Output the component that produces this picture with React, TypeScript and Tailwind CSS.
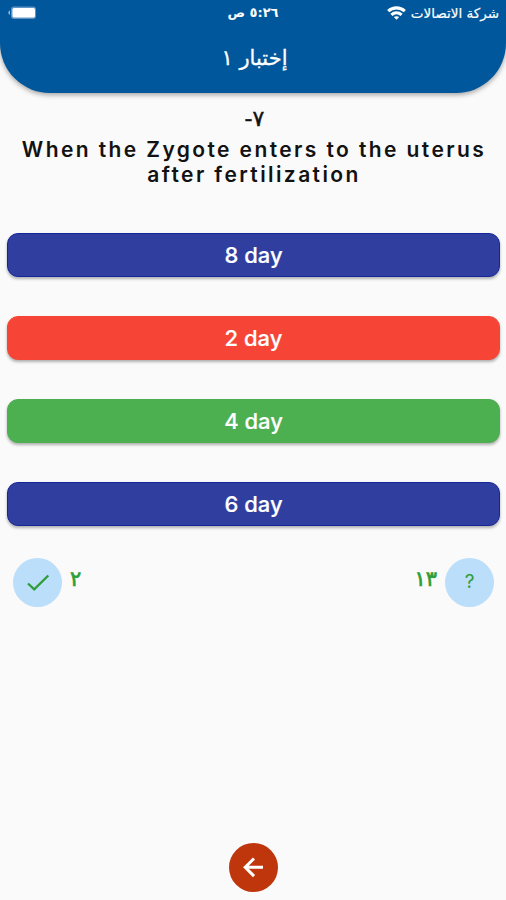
type Status = 'idle' | 'wrong' | 'correct';

interface Answer {
  id: number;
  label: string;
  status: Status;
}

const answers: Answer[] = [
  { id: 1, label: '8 day', status: 'idle' },
  { id: 2, label: '2 day', status: 'wrong' },
  { id: 3, label: '4 day', status: 'correct' },
  { id: 4, label: '6 day', status: 'idle' },
];

const statusColors: Record<Status, string> = {
  idle: 'bg-[#303f9f] border-[#15269a]',
  wrong: 'bg-[#f64537] border-[#f64537]',
  correct: 'bg-[#4caf50] border-[#4caf50]',
};

function WifiIcon() {
  return (
    <svg className="w-[19px] h-[14px]" viewBox="0 0 19 14" fill="none" stroke="white" strokeWidth="3.1">
      <path d="M1.2 5.2C6 0.8 13 0.8 17.8 5.2" />
      <path d="M4.4 8.8C7.4 6.2 11.6 6.2 14.6 8.8" />
      <path d="M9.5 13.8L6.8 11.1C8.4 9.9 10.6 9.9 12.2 11.1Z" fill="white" stroke="none" />
    </svg>
  );
}

function BatteryIcon() {
  return (
    <svg className="w-[30px] h-[14px]" viewBox="0 0 30 14">
      <rect x="4" y="0.5" width="25" height="12.5" rx="3" fill="#5f94c4" />
      <rect x="5.5" y="2" width="22.5" height="9.5" rx="1.5" fill="white" />
      <path d="M3 4.6V9C0.8 8.4 0.8 5.2 3 4.6Z" fill="#8fb4d6" />
    </svg>
  );
}

function StatusBar() {
  return (
    <div className="grid grid-cols-3 items-center h-[26px] px-[7px] text-[13px] font-['DejaVu_Sans',sans-serif]">
      <div className="flex items-center gap-[5px] whitespace-nowrap">
        <span className="text-[13.5px] [-webkit-text-stroke:0.2px]">شركة الاتصالات</span>
        <WifiIcon />
      </div>
      <div className="text-center font-bold">٥:٢٦ ص</div>
      <div className="flex justify-end">
        <BatteryIcon />
      </div>
    </div>
  );
}

export default function App() {
  return (
    <div dir="rtl" className="flex flex-col w-full h-[900px] overflow-hidden bg-[#fafafa] font-['Inter',sans-serif]">
      <header className="h-[93px] shrink-0 bg-[#01579b] text-white rounded-b-[50px] shadow-[0_2px_5px_rgba(0,0,0,0.35)]">
        <StatusBar />
        <h1 className="h-[64px] pl-[3px] leading-[64px] text-center text-[21px] font-['DejaVu_Sans',sans-serif] [-webkit-text-stroke:0.3px]">إختبار ١</h1>
      </header>

      {/* Question */}
      <div className="h-[140px] shrink-0 pt-[12px] text-center text-[#121212]">
        <p className="h-[32px] pl-[3px] leading-[28px] text-[22px] tracking-[2.4px] font-['DejaVu_Sans',sans-serif] [-webkit-text-stroke:0.5px]">٧-</p>
        <p dir="ltr" className="text-[21px] leading-[25px] tracking-[2.4px] pl-[2px] font-semibold whitespace-nowrap">
          When the Zygote enters to the uterus
          <br />
          after fertilization
        </p>
      </div>

      {/* Answers */}
      <div className="flex flex-col gap-[39px] pl-[7px] pr-[6px]">
        {answers.map((answer) => (
          <button
            key={answer.id}
            dir="ltr"
            className={`h-[44px] rounded-[11px] border text-white text-[22px] font-medium shadow-[0_2px_3px_rgba(0,0,0,0.3)] [-webkit-text-stroke:0.2px] ${statusColors[answer.status]}`}
          >
            {answer.label}
          </button>
        ))}
      </div>

      {/* Counters */}
      <div className="flex justify-between mt-[32px] pr-[12px] pl-[13px] text-[#2f9e38]">
        <div className="flex gap-[8px]">
          <div className="flex items-center justify-center w-[49px] h-[49px] rounded-full bg-[#bbdefb] text-[19px]">
            <span dir="ltr">?</span>
          </div>
          <span className="leading-[43px] text-[21px] font-['DejaVu_Sans',sans-serif] [-webkit-text-stroke:0.7px]">١٣</span>
        </div>
        <div className="flex gap-[8px]">
          <span className="leading-[43px] text-[21px] font-['DejaVu_Sans',sans-serif] [-webkit-text-stroke:0.7px]">٢</span>
          <div className="flex items-center justify-center w-[49px] h-[49px] rounded-full bg-[#bbdefb]">
            <svg className="w-[24px] h-[24px]" viewBox="0 0 24 24" fill="none" stroke="currentColor" strokeWidth="2.3">
              <path d="M2 12.5L8.2 18.3L22.3 4.5" />
            </svg>
          </div>
        </div>
      </div>

      <div className="flex justify-center mt-auto mb-[8px]">
        <button className="flex items-center justify-center w-[49px] h-[49px] rounded-full bg-[#bf360c]">
          <svg className="w-[24px] h-[24px]" viewBox="0 0 24 24" fill="none" stroke="white" strokeWidth="3">
            <path d="M22 11.3H5M13 2.5L4.2 11.3L13 20.1" />
          </svg>
        </button>
      </div>
    </div>
  );
}
